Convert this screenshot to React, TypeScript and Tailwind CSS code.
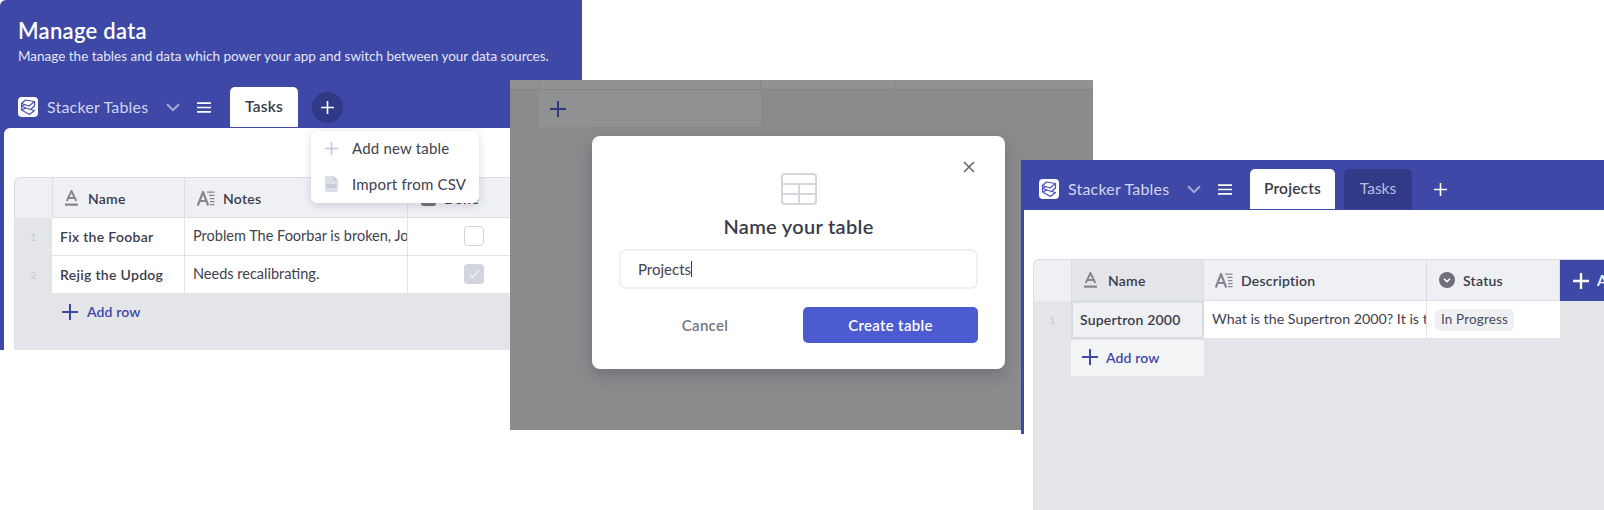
import React from "react";

const BLUE = "bg-[#3d48a7]";

function Logo() {
  return (
    <div className="w-5 h-5 rounded-[4px] bg-white flex items-center justify-center shrink-0">
      <svg width="16" height="17" viewBox="0 0 16 17" fill="none" stroke="#4653b8" strokeWidth="1.2" strokeLinejoin="round">
        <path d="M5.5 1 L14.5 2.5 L9 7 L1.5 4.5 Z" />
        <path d="M1.5 4.5 L1.5 7.5 L10.5 10.5 L14.5 7 L14.5 2.5" />
        <path d="M1.5 7.5 L5 5.5 M1.5 7.5 L1.5 11 L9.5 15.5 L14.5 11.5 L10.5 10.5 M6 9 L1.5 11" />
      </svg>
    </div>
  );
}

function Chevron() {
  return (
    <svg width="14" height="9" viewBox="0 0 14 9" fill="none" stroke="#a5abd8" strokeWidth="2">
      <path d="M1 1.2 L7 7.2 L13 1.2" />
    </svg>
  );
}

function Hamburger() {
  return (
    <svg width="14" height="11" viewBox="0 0 14 11" fill="none" stroke="#ffffff" strokeWidth="1.7">
      <path d="M0 1.2 H14 M0 5.5 H14 M0 9.8 H14" />
    </svg>
  );
}

function Plus({ size = 16, color = "#3d48a7", w = 2 }: { size?: number; color?: string; w?: number }) {
  return (
    <svg width={size} height={size} viewBox="0 0 16 16" fill="none" stroke={color} strokeWidth={w} className="shrink-0">
      <path d="M8 0 V16 M0 8 H16" />
    </svg>
  );
}

function NameIcon() {
  return (
    <svg width="15" height="16" viewBox="0 0 14 16" fill="none" stroke="#85868f" strokeWidth="1.9" className="shrink-0">
      <path d="M2.2 11 L7 1 L11.8 11 M3.8 8 H10.2" />
      <path d="M0.5 14.6 H13.5" strokeWidth="2.2" />
    </svg>
  );
}

function LongTextIcon() {
  return (
    <svg width="18" height="15" viewBox="0 0 18 15" fill="none" stroke="#85868f" strokeWidth="2.2" className="shrink-0">
      <path d="M0.8 14.5 L6 1 L11.2 14.5 M2.8 10 H9.2" />
      <path d="M10 1.2 H17.5 M12 4.4 H17.5" strokeWidth="1.3" />
      <path d="M13 7.6 H17.5 M13 10.6 H17.5 M13 13.6 H17.5" strokeWidth="1.2" />
    </svg>
  );
}

function StatusIcon() {
  return (
    <svg width="16" height="16" viewBox="0 0 16 16" className="shrink-0">
      <circle cx="8" cy="8" r="8" fill="#6f7079" />
      <path d="M5 6.8 L8 9.6 L11 6.8" fill="none" stroke="#fff" strokeWidth="1.5" />
    </svg>
  );
}

function FileIcon() {
  return (
    <svg width="13" height="16" viewBox="0 0 13 16" className="shrink-0">
      <path d="M2 0 H8.5 L13 4.5 V14 a2 2 0 0 1 -2 2 H2 a2 2 0 0 1 -2 -2 V2 a2 2 0 0 1 2 -2 Z" fill="#dcdee8" />
      <path d="M8.5 0 V4.5 H13" fill="#c3c7dc" />
      <rect x="1.5" y="8" width="10" height="4" fill="#c9ccdc" />
    </svg>
  );
}

function TabBar({ children }: { children: React.ReactNode }) {
  return (
    <div className="flex h-10 items-center pl-[18px]">
      <Logo />
      <span className="ml-[9px] w-[119px] text-[16px] leading-none tracking-[0.2px] text-[#d3d6ee]">Stacker Tables</span>
      <Chevron />
      <span className="ml-[17px] mr-[19px] flex">
        <Hamburger />
      </span>
      {children}
    </div>
  );
}

function ActiveTab({ label, w }: { label: string; w: string }) {
  return (
    <div className={`${w} h-10 self-end rounded-t-[5px] bg-white flex items-center justify-center text-[15.5px] font-semibold tracking-[0.2px] text-[#3a3c4a]`}>
      {label}
    </div>
  );
}

function HeadCell({ icon, label, className = "" }: { icon: React.ReactNode; label: string; className?: string }) {
  return (
    <div className={`flex items-center border-r border-b border-[#dcdee5] text-[14px] font-semibold tracking-[0.25px] text-[#3a3c4a] ${className}`}>
      {icon}
      <span>{label}</span>
    </div>
  );
}

function Row1Cells({ n, name, notes, checked }: { n: number; name: string; notes: string; checked: boolean }) {
  return (
    <>
      <div className="h-[38px] bg-[#e4e5e9] flex items-center justify-center text-[10px] text-[#c5c7cf]">{n}</div>
      <div className="h-[38px] bg-white border-r border-b border-[#e2e4e9] flex items-center pb-px pl-[8px] text-[14px] font-semibold tracking-[0.3px] text-[#3a3c4a]">
        {name}
      </div>
      <div className="h-[38px] bg-white border-r border-b border-[#e2e4e9] flex items-center pb-[2px] pl-[8px] text-[14.5px] text-[#3f414e] overflow-hidden whitespace-nowrap">
        {notes}
      </div>
      <div className="h-[38px] bg-white border-b border-[#e2e4e9] flex items-center pb-px pl-[56px]">
        {checked ? (
          <div className="w-5 h-5 rounded-[4px] bg-[#d2d5df] flex items-center justify-center">
            <svg width="12" height="10" viewBox="0 0 12 10" fill="none" stroke="#eef0f4" strokeWidth="1.4">
              <path d="M1 5 L4.5 8.5 L11 1" />
            </svg>
          </div>
        ) : (
          <div className="w-5 h-5 rounded-[4px] bg-white border border-[#d2d5df]" />
        )}
      </div>
    </>
  );
}

function WindowOne() {
  return (
    <div className={`absolute left-0 top-0 w-[582px] h-[350px] overflow-hidden rounded-tl-[6px] ${BLUE} flex flex-col`}>
      <div className="h-[87px] shrink-0 pl-[18px] pt-[18px] text-white">
        <div className="text-[22px] font-semibold leading-[26px] tracking-[0.3px]">Manage data</div>
        <div className="mt-[2px] text-[13.5px] leading-[20px] whitespace-nowrap text-[#e4e6f5]">
          Manage the tables and data which power your app and switch between your data sources.
        </div>
      </div>
      <TabBar>
        <ActiveTab label="Tasks" w="w-[68px]" />
        <div className="ml-[14px] w-[31px] h-[31px] rounded-full bg-[#2f3a86] flex items-center justify-center">
          <Plus size={13} color="#ffffff" />
        </div>
      </TabBar>
      <div className="ml-[4px] flex-1 rounded-tl-[6px] bg-white pl-[10px] pt-[49px] mt-px">
        <div className="h-full bg-[#e4e5e9] rounded-tl-[6px] border-l border-t border-[#dcdee5] overflow-hidden">
          <div className="grid grid-cols-[37px_133px_223px_175px]">
            <div className="h-[40px] bg-[#eef0f4] border-b border-[#eef0f4]" />
            <HeadCell className="h-[40px] pt-px bg-[#eef0f4] pl-[11px] gap-[9px] border-l" icon={<NameIcon />} label="Name" />
            <HeadCell className="h-[40px] pt-px bg-[#eef0f4] pl-[12px] gap-[8px]" icon={<LongTextIcon />} label="Notes" />
            <HeadCell
              className="h-[40px] pt-px bg-[#eef0f4] pl-[13px] gap-[8px] border-r-0"
              icon={<span className="block w-[15px] h-[15px] rounded-[3px] bg-[#6f7079]" />}
              label="Done"
            />
            <Row1Cells n={1} name="Fix the Foobar" notes="Problem The Foorbar is broken, Joe needs to fix it" checked={false} />
            <Row1Cells n={2} name="Rejig the Updog" notes="Needs recalibrating." checked={true} />
          </div>
          <div className="ml-[47px] mt-[7px] flex items-center gap-[9px] text-[14px] font-semibold tracking-[0.1px] text-[#3d48a7]">
            <Plus />
            <span>Add row</span>
          </div>
        </div>
      </div>
    </div>
  );
}

function Dropdown() {
  return (
    <div className="absolute left-[311px] top-[131px] w-[168px] h-[72px] rounded-[6px] bg-white shadow-[0_2px_8px_rgba(60,64,90,0.2)] flex flex-col justify-center gap-[11px] pb-[2px] pl-[14px] text-[15px] tracking-[0.2px] text-[#3f414e]">
      <div className="flex items-center h-[25px] gap-[13px]">
        <Plus size={13} color="#c3c8e2" />
        <span className="ml-[1px]">Add new table</span>
      </div>
      <div className="flex items-center h-[25px] gap-[14px]">
        <FileIcon />
        <span>Import from CSV</span>
      </div>
    </div>
  );
}

function WindowTwo() {
  return (
    <div className="absolute left-[510px] top-[80px] w-[583px] h-[350px] bg-[#8a8b8d] flex flex-col">
      <div className="h-[10px] bg-[#929293] border-b border-[#858587] flex shrink-0">
        <div className="w-[29px]" />
        <div className="w-[222px] border-l border-r border-[#858587]" />
        <div className="w-[134px] border-r border-[#858587]" />
      </div>
      <div className="ml-[29px] w-[222px] h-[37px] bg-[#909192] flex items-center pl-[11px] shrink-0">
        <Plus color="#2e3880" />
      </div>
      <div className="ml-[82px] mt-[9px] w-[413px] h-[233px] rounded-[8px] bg-white shadow-[0_6px_16px_rgba(40,40,50,0.25)] relative flex flex-col items-center pt-[37px] px-[27px]">
        <svg width="14" height="14" viewBox="0 0 14 14" fill="none" stroke="#6a6c78" strokeWidth="1.7" className="absolute right-[29px] top-[24px]">
          <path d="M2 2 L12 12 M12 2 L2 12" />
        </svg>
        <svg width="36" height="32" viewBox="0 0 36 32" fill="none" stroke="#d3d6df" strokeWidth="2">
          <rect x="1" y="1" width="34" height="30" rx="3" />
          <path d="M1 11 H35 M1 21 H35 M18 11 V31" />
        </svg>
        <div className="mt-[8px] text-[20px] leading-[26px] font-semibold tracking-[0.3px] text-[#3a3c4a]">Name your table</div>
        <div className="mt-[10px] w-full h-[40px] rounded-[7px] border-2 border-[#eff0f6] flex items-center pl-[17px] text-[15px] text-[#3f414e]">
          <span>Projects</span>
          <span className="w-px h-[16px] bg-[#3a3c4a]" />
        </div>
        <div className="mt-[18px] w-full flex items-center">
          <div className="w-[183px] pr-[11px] text-center text-[15px] font-semibold tracking-[0.3px] text-[#737584]">Cancel</div>
          <div className="ml-auto w-[175px] h-[36px] rounded-[5px] bg-[#4c5cd0] flex items-center justify-center text-[15px] font-semibold tracking-[0.3px] text-white">
            Create table
          </div>
        </div>
      </div>
    </div>
  );
}

function WindowThree() {
  return (
    <div className="absolute left-[1021px] top-[160px] w-[583px] h-[350px] bg-white overflow-hidden">
      <div className={`${BLUE} h-[50px] pt-[9px]`}>
        <TabBar>
          <div className="-ml-px self-end">
            <ActiveTab label="Projects" w="w-[85px]" />
          </div>
          <div className="ml-[9px] w-[68px] h-10 rounded-t-[5px] bg-[#303a86] flex items-center justify-center text-[15.5px] text-[#b9bee2]">
            Tasks
          </div>
          <div className="ml-[22px]">
            <Plus size={13} color="#ffffff" />
          </div>
        </TabBar>
      </div>
      <div className="flex h-[300px]">
        <div className={`w-[3px] h-[224px] shrink-0 ${BLUE}`} />
        <div className="flex-1 rounded-tl-[6px] pl-[9px] pt-[49px]">
          <div className="h-full bg-[#e4e5e9] rounded-tl-[6px] border-l border-t border-[#dcdee5] overflow-hidden">
            <div className="grid grid-cols-[37px_133px_223px_133px_60px] h-[41px]">
              <div className="bg-[#eef0f4] border-b border-[#eef0f4]" />
              <HeadCell className="bg-[#e4e5e9] pl-[11px] gap-[10px] border-l" icon={<NameIcon />} label="Name" />
              <HeadCell className="bg-[#eef0f4] pl-[11px] gap-[8px]" icon={<LongTextIcon />} label="Description" />
              <HeadCell className="bg-[#eef0f4] pl-[12px] gap-[8px]" icon={<StatusIcon />} label="Status" />
              <div className={`${BLUE} flex items-center pl-[13px] gap-[8px] text-[15px] font-semibold text-white whitespace-nowrap`}>
                <Plus size={16} color="#ffffff" w={2.4} />
                <span>Add field</span>
              </div>
            </div>
            <div className="grid grid-cols-[37px_133px_223px_133px] h-[38px]">
              <div className="flex items-center justify-center text-[10px] text-[#c5c7cf] bg-[#e4e5e9]">1</div>
              <div className="bg-[#eef0f4] border-2 border-[#d9dbe3] flex items-center pb-px pl-[7px] text-[14px] font-semibold tracking-[0.2px] text-[#3a3c4a]">
                Supertron 2000
              </div>
              <div className="bg-white border-r border-b border-[#e2e4e9] flex items-center pb-[2px] pl-[8px] text-[14.25px] text-[#3f414e] overflow-hidden whitespace-nowrap">
                What is the Supertron 2000? It is the best thing ever made
              </div>
              <div className="bg-white border-b border-[#e2e4e9] flex items-center pl-[8px]">
                <span className="h-[22px] px-[6px] rounded-[5px] bg-[#eef0f4] flex items-center text-[13.5px] tracking-[0.15px] text-[#4a4c59]">In Progress</span>
              </div>
            </div>
            <div className="ml-[37px] mt-px w-[133px] h-[36px] bg-[#f3f4f6] flex items-center pb-[2px] pl-[11px] gap-[8px] text-[14px] font-semibold tracking-[0.1px] text-[#3d48a7]">
              <Plus />
              <span>Add row</span>
            </div>
          </div>
        </div>
      </div>
    </div>
  );
}

export default function App() {
  return (
    <div className="relative w-[1604px] h-[510px] overflow-hidden bg-white font-['Lato','Liberation_Sans',sans-serif]">
      <WindowOne />
      <Dropdown />
      <WindowTwo />
      <WindowThree />
    </div>
  );
}
